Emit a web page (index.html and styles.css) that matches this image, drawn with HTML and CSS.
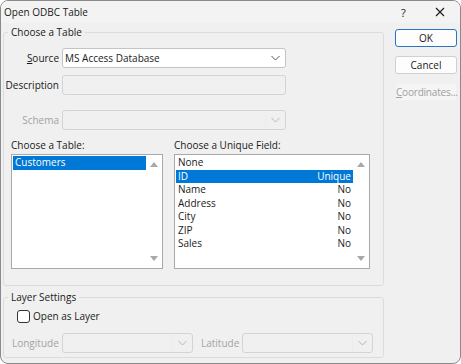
FILE: index.html
```html
<!DOCTYPE html>
<html lang="en">
<head>
    <meta charset="UTF-8">
    <title>Open ODBC Table</title>
    <link rel="stylesheet" href="styles.css">
</head>
<body>
    <div class="window">
        <div class="titlebar">
            <span class="title">Open ODBC Table</span>
            <span class="help">?</span>
            <svg class="close" width="10" height="10" viewBox="0 0 10 10">
                <path d="M1 1 L9 9 M9 1 L1 9" stroke="#1a1a1a" stroke-width="1.1" fill="none"/>
            </svg>
        </div>

        <div class="content">
            <div class="main">
                <fieldset class="group table-group">
                    <legend>Choose a Table</legend>
                    <div class="form-grid">
                        <label class="field-label"><u>S</u>ource</label>
                        <div class="combo">
                            <span class="combo-text">MS Access Database</span>
                            <svg class="chevron" width="9" height="6" viewBox="0 0 9 6"><path d="M0.5 1 L4.5 5 L8.5 1" stroke="#555" fill="none"/></svg>
                        </div>
                        <label class="field-label">Description</label>
                        <div class="textbox disabled"></div>
                        <label class="field-label dim schema-label">Schema</label>
                        <div class="combo disabled schema-combo">
                            <span class="combo-text"></span>
                            <span class="sep"></span>
                            <svg class="chevron" width="9" height="6" viewBox="0 0 9 6"><path d="M0.5 1 L4.5 5 L8.5 1" stroke="#b5b5b5" fill="none"/></svg>
                        </div>
                    </div>

                    <div class="lists">
                        <div class="list-col table-col">
                            <div class="list-label">Choose a Table:</div>
                            <div class="listbox">
                                <div class="items">
                                    <div class="item selected">Customers</div>
                                </div>
                                <div class="scrollbar">
                                    <span class="arrow up"></span>
                                    <span class="arrow down"></span>
                                </div>
                            </div>
                        </div>
                        <div class="list-col field-col">
                            <div class="list-label">Choose a Unique Field:</div>
                            <div class="listbox">
                                <div class="items">
                                    <div class="item"><span>None</span></div>
                                    <div class="item selected"><span>ID</span><span>Unique</span></div>
                                    <div class="item"><span>Name</span><span>No</span></div>
                                    <div class="item"><span>Address</span><span>No</span></div>
                                    <div class="item"><span>City</span><span>No</span></div>
                                    <div class="item"><span>ZIP</span><span>No</span></div>
                                    <div class="item"><span>Sales</span><span>No</span></div>
                                </div>
                                <div class="scrollbar">
                                    <span class="arrow up"></span>
                                    <span class="arrow down"></span>
                                </div>
                            </div>
                        </div>
                    </div>
                </fieldset>

                <fieldset class="group layer-group">
                    <legend>Layer Settings</legend>
                    <label class="check-row">
                        <span class="checkbox"></span>
                        <span>Open as Layer</span>
                    </label>
                    <div class="coord-row">
                        <span class="coord-label dim">Longitude</span>
                        <div class="combo disabled coord-combo">
                            <span class="combo-text"></span>
                            <span class="sep"></span>
                            <svg class="chevron" width="9" height="6" viewBox="0 0 9 6"><path d="M0.5 1 L4.5 5 L8.5 1" stroke="#b5b5b5" fill="none"/></svg>
                        </div>
                        <span class="coord-label dim lat-label">Latitude</span>
                        <div class="combo disabled coord-combo">
                            <span class="combo-text"></span>
                            <span class="sep"></span>
                            <svg class="chevron" width="9" height="6" viewBox="0 0 9 6"><path d="M0.5 1 L4.5 5 L8.5 1" stroke="#b5b5b5" fill="none"/></svg>
                        </div>
                    </div>
                </fieldset>
            </div>

            <div class="buttons">
                <button class="btn default">OK</button>
                <button class="btn">Cancel</button>
                <button class="btn disabled"><u>C</u>oordinates...</button>
            </div>
        </div>
    </div>
</body>
</html>
```

FILE: styles.css
```css
* {
    box-sizing: border-box;
}

body {
    margin: 0;
    padding: 0;
    font-family: 'Open Sans', 'Noto Sans', sans-serif;
    font-size: 10px;
    color: #1a1a1a;
    background: #ffffff;
}

.window {
    width: 461px;
    height: 364px;
    border: 1px solid #8a8a8a;
    border-radius: 8px;
    background: #f0f0f0;
    overflow: hidden;
}

.titlebar {
    height: 22px;
    display: flex;
    align-items: center;
    padding-left: 3px;
    background: #f3f3f3;
}

.title {
    flex: 1;
    line-height: 16px;
}

.help {
    width: 12px;
    margin-right: 22px;
    font-size: 11px;
}

.close {
    margin-right: 15px;
}

.content {
    display: flex;
}

.main {
    margin-left: 2px;
    width: 381px;
}

.group {
    margin: 0;
    padding: 0;
    border: 1px solid #dcdcdc;
    border-radius: 3px;
}

.group legend {
    margin-left: 4px;
    padding: 0 3px;
    line-height: 16px;
}

.table-group {
    margin-top: 1px;
    height: 262px;
}

.layer-group {
    margin-top: 3px;
    height: 69px;
}

/* form rows */
.form-grid {
    display: grid;
    grid-template-columns: 58px 224px;
    grid-template-rows: 20px 20px 20px;
    row-gap: 7px;
    margin-top: 8px;
    align-items: center;
}

.field-label {
    text-align: right;
    padding-right: 3px;
    white-space: nowrap;
}

.schema-label,
.schema-combo {
    margin-top: 15px;
}

.dim {
    color: #a3a3a3;
}

.combo,
.textbox {
    height: 20px;
    border: 1px solid #c4c4c4;
    border-radius: 3px;
    background: #ffffff;
    display: flex;
    align-items: center;
}

.combo-text {
    flex: 1;
    padding-left: 2px;
    white-space: nowrap;
}

.combo .chevron {
    margin-right: 5px;
}

.combo.disabled,
.textbox.disabled {
    background: #f0f0f0;
    border-color: #d4d4d4;
}

.combo .sep {
    width: 1px;
    align-self: stretch;
    margin: 1px 0;
    background: #ececec;
    margin-right: 5px;
}

/* lists */
.lists {
    display: flex;
    gap: 11px;
    margin-top: 15px;
    padding-left: 7px;
}

.list-label {
    line-height: 16px;
}

.listbox {
    height: 115px;
    border: 1px solid #a9a9a9;
    background: #ffffff;
    display: flex;
    margin-top: 1px;
}

.table-col .listbox {
    width: 152px;
}

.field-col .listbox {
    width: 196px;
}

.items {
    flex: 1;
    padding: 1px 0 0 1px;
}

.item {
    height: 13.5px;
    line-height: 13.5px;
    padding: 0 2px 0 2px;
    display: flex;
    justify-content: space-between;
    white-space: nowrap;
}

.item.selected {
    background: #0078d7;
    color: #ffffff;
}

.scrollbar {
    width: 16px;
    display: flex;
    flex-direction: column;
    justify-content: space-between;
    align-items: center;
    padding: 7px 0 7px 0;
}

.arrow {
    width: 0;
    height: 0;
    border-left: 4px solid transparent;
    border-right: 4px solid transparent;
}

.arrow.up {
    border-bottom: 5px solid #a8a8a8;
}

.arrow.down {
    border-top: 5px solid #a8a8a8;
}

/* layer settings */
.check-row {
    display: flex;
    align-items: center;
    gap: 3px;
    margin-top: 4px;
    padding-left: 13px;
    height: 14px;
}

.checkbox {
    width: 13px;
    height: 13px;
    border: 1px solid #333333;
    border-radius: 3px;
    background: #ffffff;
}

.coord-row {
    display: flex;
    align-items: center;
    margin-top: 10px;
    padding-left: 8px;
}

.coord-label {
    width: 50px;
}

.lat-label {
    width: 41px;
    margin-left: 8px;
}

.coord-combo {
    width: 131px;
}

/* buttons */
.buttons {
    display: flex;
    flex-direction: column;
    gap: 9px;
    margin-left: 11px;
    margin-top: 6px;
}

.btn {
    width: 62px;
    height: 18px;
    padding: 0;
    font-family: inherit;
    font-size: 10px;
    color: #1a1a1a;
    background: #fdfdfd;
    border: 1px solid #d0d0d0;
    border-radius: 3px;
    white-space: nowrap;
}

.btn.default {
    border: 1.5px solid #2b73c4;
}

.btn.disabled {
    color: #a0a0a0;
    background: #f5f5f5;
    border-color: #f0f0f0;
    letter-spacing: -0.2px;
}
```
